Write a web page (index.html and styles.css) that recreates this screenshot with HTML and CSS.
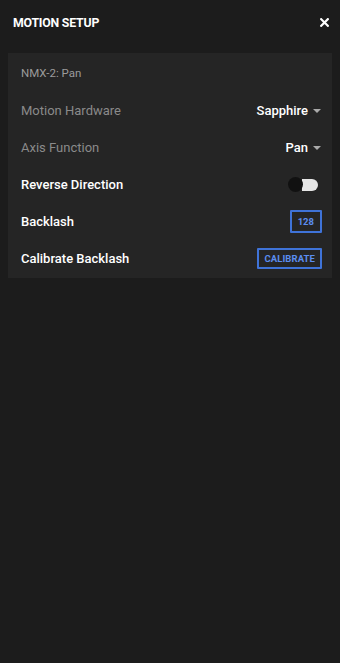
FILE: index.html
```html
<!DOCTYPE html>
<html>
<head>
<meta charset="utf-8">
<link rel="stylesheet" href="styles.css">
</head>
<body>
<div class="app">
  <header class="header">
    <span class="title">MOTION SETUP</span>
    <svg class="close" width="9" height="9" viewBox="0 0 9 9"><path d="M1.2 1.2 L7.8 7.8 M7.8 1.2 L1.2 7.8" stroke="#fff" stroke-width="2.2" stroke-linecap="square"/></svg>
  </header>
  <section class="card">
    <div class="card-title">NMX-2: Pan</div>
    <div class="row">
      <span class="label muted">Motion Hardware</span>
      <span class="select">Sapphire <i class="caret"></i></span>
    </div>
    <div class="row">
      <span class="label muted">Axis Function</span>
      <span class="select">Pan <i class="caret"></i></span>
    </div>
    <div class="row">
      <span class="label">Reverse Direction</span>
      <span class="toggle"><span class="knob"></span></span>
    </div>
    <div class="row">
      <span class="label">Backlash</span>
      <span class="box">128</span>
    </div>
    <div class="row">
      <span class="label">Calibrate Backlash</span>
      <span class="box btn">CALIBRATE</span>
    </div>
  </section>
</div>
</body>
</html>
```
FILE: styles.css
```css
html, body {
  margin: 0;
  padding: 0;
  background: #1c1c1c;
  height: 100%;
}
body {
  font-family: Roboto, "Liberation Sans", sans-serif;
  color: #fff;
}
.header {
  height: 45px;
  display: flex;
  align-items: center;
  justify-content: space-between;
  padding: 0 11px 0 13px;
  margin-bottom: 8px;
}
.title {
  font-size: 12.3px;
  font-weight: 700;
  letter-spacing: -0.2px;
}
.close {
  display: block;
}
.card {
  margin: 0 8px;
  background: #252525;
  padding: 0 10px 1px 13px;
}
.card-title {
  height: 39px;
  display: flex;
  align-items: center;
  font-size: 11.5px;
  color: #9b9b9b;
}
.row {
  height: 37px;
  display: flex;
  align-items: center;
  justify-content: space-between;
}
.label {
  font-size: 13px;
  font-weight: 500;
  color: #fff;
}
.label.muted {
  color: #8a8a8a;
  font-weight: 400;
}
.select {
  font-size: 13px;
  font-weight: 500;
  display: flex;
  align-items: center;
  gap: 5px;
  margin-right: 1px;
}
.caret {
  width: 0;
  height: 0;
  border-left: 4px solid transparent;
  border-right: 4px solid transparent;
  border-top: 4px solid #aaa;
}
.toggle {
  position: relative;
  width: 30px;
  height: 13px;
  display: flex;
  align-items: center;
  justify-content: flex-end;
  margin-right: 4px;
}
.toggle::after {
  content: "";
  width: 16px;
  height: 12px;
  border-radius: 0 6px 6px 0;
  background: #e6e6e6;
}
.knob {
  position: absolute;
  left: 0;
  top: -1px;
  width: 15px;
  height: 15px;
  border-radius: 50%;
  background: #111;
}
.box {
  border: 2px solid #3f73d8;
  color: #5b8df0;
  font-size: 9.5px;
  font-weight: 700;
  padding: 4px 6px;
  line-height: 11px;
  border-radius: 1px;
}
.box.btn {
  padding: 3px 5px;
  font-size: 9.5px;
  letter-spacing: 0.1px;
}
```
